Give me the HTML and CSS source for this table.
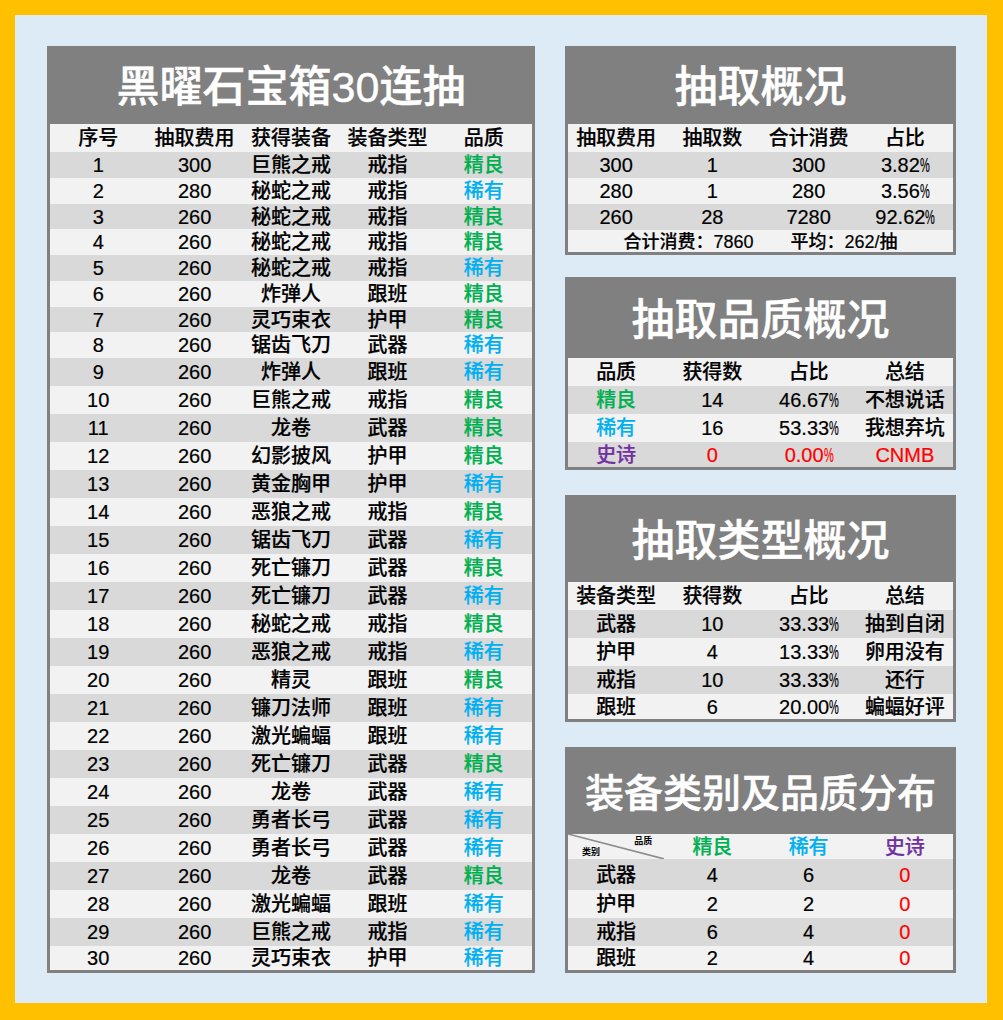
FILE: index.html
```html
<!DOCTYPE html>
<html lang="zh-CN">
<head>
<meta charset="utf-8">
<title>黑曜石宝箱30连抽</title>
<link rel="stylesheet" href="styles.css">
</head>
<body>
<div class="frame">
  <section class="panel panel-main">
    <div class="title">黑曜石宝箱30连抽</div>
    <div class="row"><span>序号</span><span>抽取费用</span><span>获得装备</span><span>装备类型</span><span>品质</span></div>
    <div class="row"><span>1</span><span>300</span><span>巨熊之戒</span><span>戒指</span><span class="good">精良</span></div>
    <div class="row"><span>2</span><span>280</span><span>秘蛇之戒</span><span>戒指</span><span class="rare">稀有</span></div>
    <div class="row"><span>3</span><span>260</span><span>秘蛇之戒</span><span>戒指</span><span class="good">精良</span></div>
    <div class="row"><span>4</span><span>260</span><span>秘蛇之戒</span><span>戒指</span><span class="good">精良</span></div>
    <div class="row"><span>5</span><span>260</span><span>秘蛇之戒</span><span>戒指</span><span class="rare">稀有</span></div>
    <div class="row"><span>6</span><span>260</span><span>炸弹人</span><span>跟班</span><span class="good">精良</span></div>
    <div class="row"><span>7</span><span>260</span><span>灵巧束衣</span><span>护甲</span><span class="good">精良</span></div>
    <div class="row"><span>8</span><span>260</span><span>锯齿飞刀</span><span>武器</span><span class="rare">稀有</span></div>
    <div class="row"><span>9</span><span>260</span><span>炸弹人</span><span>跟班</span><span class="rare">稀有</span></div>
    <div class="row"><span>10</span><span>260</span><span>巨熊之戒</span><span>戒指</span><span class="good">精良</span></div>
    <div class="row"><span>11</span><span>260</span><span>龙卷</span><span>武器</span><span class="good">精良</span></div>
    <div class="row"><span>12</span><span>260</span><span>幻影披风</span><span>护甲</span><span class="good">精良</span></div>
    <div class="row"><span>13</span><span>260</span><span>黄金胸甲</span><span>护甲</span><span class="rare">稀有</span></div>
    <div class="row"><span>14</span><span>260</span><span>恶狼之戒</span><span>戒指</span><span class="good">精良</span></div>
    <div class="row"><span>15</span><span>260</span><span>锯齿飞刀</span><span>武器</span><span class="rare">稀有</span></div>
    <div class="row"><span>16</span><span>260</span><span>死亡镰刀</span><span>武器</span><span class="good">精良</span></div>
    <div class="row"><span>17</span><span>260</span><span>死亡镰刀</span><span>武器</span><span class="rare">稀有</span></div>
    <div class="row"><span>18</span><span>260</span><span>秘蛇之戒</span><span>戒指</span><span class="good">精良</span></div>
    <div class="row"><span>19</span><span>260</span><span>恶狼之戒</span><span>戒指</span><span class="rare">稀有</span></div>
    <div class="row"><span>20</span><span>260</span><span>精灵</span><span>跟班</span><span class="good">精良</span></div>
    <div class="row"><span>21</span><span>260</span><span>镰刀法师</span><span>跟班</span><span class="rare">稀有</span></div>
    <div class="row"><span>22</span><span>260</span><span>激光蝙蝠</span><span>跟班</span><span class="rare">稀有</span></div>
    <div class="row"><span>23</span><span>260</span><span>死亡镰刀</span><span>武器</span><span class="good">精良</span></div>
    <div class="row"><span>24</span><span>260</span><span>龙卷</span><span>武器</span><span class="rare">稀有</span></div>
    <div class="row"><span>25</span><span>260</span><span>勇者长弓</span><span>武器</span><span class="rare">稀有</span></div>
    <div class="row"><span>26</span><span>260</span><span>勇者长弓</span><span>武器</span><span class="rare">稀有</span></div>
    <div class="row"><span>27</span><span>260</span><span>龙卷</span><span>武器</span><span class="good">精良</span></div>
    <div class="row"><span>28</span><span>260</span><span>激光蝙蝠</span><span>跟班</span><span class="rare">稀有</span></div>
    <div class="row"><span>29</span><span>260</span><span>巨熊之戒</span><span>戒指</span><span class="rare">稀有</span></div>
    <div class="row"><span>30</span><span>260</span><span>灵巧束衣</span><span>护甲</span><span class="rare">稀有</span></div>
  </section>

  <div class="side">
    <section class="panel panel-summary">
      <div class="title">抽取概况</div>
      <div class="row row4"><span>抽取费用</span><span>抽取数</span><span>合计消费</span><span>占比</span></div>
      <div class="row row4 small"><span>300</span><span>1</span><span>300</span><span>3.82<i class="pct">%</i></span></div>
      <div class="row row4 small"><span>280</span><span>1</span><span>280</span><span>3.56<i class="pct">%</i></span></div>
      <div class="row row4 small"><span>260</span><span>28</span><span>7280</span><span>92.62<i class="pct">%</i></span></div>
      <div class="row row-total"><span>合计消费：7860</span><span>平均：262/抽</span></div>
    </section>

    <section class="panel panel-quality">
      <div class="title">抽取品质概况</div>
      <div class="row row4"><span>品质</span><span>获得数</span><span>占比</span><span>总结</span></div>
      <div class="row row4 small"><span class="good">精良</span><span>14</span><span>46.67<i class="pct">%</i></span><span>不想说话</span></div>
      <div class="row row4 small"><span class="rare">稀有</span><span>16</span><span>53.33<i class="pct">%</i></span><span>我想弃坑</span></div>
      <div class="row row4 small"><span class="epic">史诗</span><span class="red">0</span><span class="red">0.00<i class="pct">%</i></span><span class="red">CNMB</span></div>
    </section>

    <section class="panel panel-type">
      <div class="title">抽取类型概况</div>
      <div class="row row4"><span>装备类型</span><span>获得数</span><span>占比</span><span>总结</span></div>
      <div class="row row4 small"><span>武器</span><span>10</span><span>33.33<i class="pct">%</i></span><span>抽到自闭</span></div>
      <div class="row row4 small"><span>护甲</span><span>4</span><span>13.33<i class="pct">%</i></span><span>卵用没有</span></div>
      <div class="row row4 small"><span>戒指</span><span>10</span><span>33.33<i class="pct">%</i></span><span>还行</span></div>
      <div class="row row4 small"><span>跟班</span><span>6</span><span>20.00<i class="pct">%</i></span><span>蝙蝠好评</span></div>
    </section>

    <section class="panel panel-dist">
      <div class="title title-long">装备类别及品质分布</div>
      <div class="row row4">
        <div class="diag">
          <svg class="diag-line" viewBox="0 0 96 25" preserveAspectRatio="none"><line x1="0" y1="0" x2="96" y2="25" stroke="#8c8c8c" stroke-width="1.6"/></svg>
          <span class="diag-top">品质</span>
          <span class="diag-bottom">类别</span>
        </div>
        <span class="good">精良</span><span class="rare">稀有</span><span class="epic">史诗</span>
      </div>
      <div class="row row4"><span>武器</span><span>4</span><span>6</span><span class="red">0</span></div>
      <div class="row row4"><span>护甲</span><span>2</span><span>2</span><span class="red">0</span></div>
      <div class="row row4"><span>戒指</span><span>6</span><span>4</span><span class="red">0</span></div>
      <div class="row row4"><span>跟班</span><span>2</span><span>4</span><span class="red">0</span></div>
    </section>
  </div>
</div>
</body>
</html>
```

FILE: styles.css
```css
html, body {
  margin: 0;
  padding: 0;
}

body {
  width: 1003px;
  height: 1020px;
  font-family: "Liberation Sans", "Noto Sans CJK SC", sans-serif;
  color: #000;
}

.frame {
  box-sizing: border-box;
  width: 1003px;
  height: 1020px;
  border-style: solid;
  border-color: #FFC000;
  border-width: 15px 16px 17px 15px;
  background: #DDEBF7;
  padding: 31px 0 0 32px;
  display: flex;
  gap: 30px;
  align-items: flex-start;
}

.panel {
  box-sizing: border-box;
  border: 3px solid #808080;
  background: #808080;
  display: grid;
}

.panel-main {
  width: 488px;
  grid-template-rows: 75px 28px 26px 26px 25px 26px 26px 26px 25px 26px 28px repeat(20, 28px) 24px;
}

.side {
  width: 391px;
  display: flex;
  flex-direction: column;
}

.panel-summary {
  grid-template-rows: 75px 28px 26px 26px 26px 22px;
}

.panel-quality {
  margin-top: 22px;
  grid-template-rows: 78px 28px 28px 28px 25px;
}

.panel-type {
  margin-top: 25px;
  grid-template-rows: 84px 28px 28px 28px 28px 25px;
}

.panel-dist {
  margin-top: 25px;
  grid-template-rows: 84px 25px 31px 28px 28px 24px;
}

.title {
  color: #fff;
  font-size: 43px;
  font-weight: 500;
  -webkit-text-stroke: 0.45px #fff;
  display: flex;
  align-items: center;
  justify-content: center;
  line-height: 1;
  padding-top: 2px;
}

.title-long {
  font-size: 39px;
}

.row {
  display: grid;
  grid-template-columns: repeat(5, 1fr);
  align-items: center;
  text-align: center;
  background: #F2F2F2;
  font-size: 20px;
  font-weight: 500;
  -webkit-text-stroke: 0.2px currentColor;
  line-height: 1;
  white-space: nowrap;
  overflow: hidden;
}

.row:nth-child(odd) {
  background: #D9D9D9;
}

.row4 {
  grid-template-columns: repeat(4, 1fr);
}

.pct {
  font-style: normal;
  display: inline-block;
  width: 9px;
  transform: scaleX(0.55);
  transform-origin: left center;
}

.row-total {
  display: flex;
  justify-content: center;
  gap: 37px;
  font-size: 18px;
  padding-top: 1px;
}

.good { color: #00B050; }
.rare { color: #00B0F0; }
.epic { color: #7030A0; }
.red { color: #FF0000; }

.diag {
  position: relative;
  align-self: stretch;
  display: flex;
  flex-direction: column;
  justify-content: space-between;
  padding: 3px 12px 2px 14px;
  font-size: 9px;
  font-weight: 700;
  -webkit-text-stroke: 0;
}

.diag-line {
  position: absolute;
  left: 0;
  top: 0;
  width: 100%;
  height: 100%;
}

.diag-top {
  align-self: flex-end;
}

.diag-bottom {
  align-self: flex-start;
}
```
